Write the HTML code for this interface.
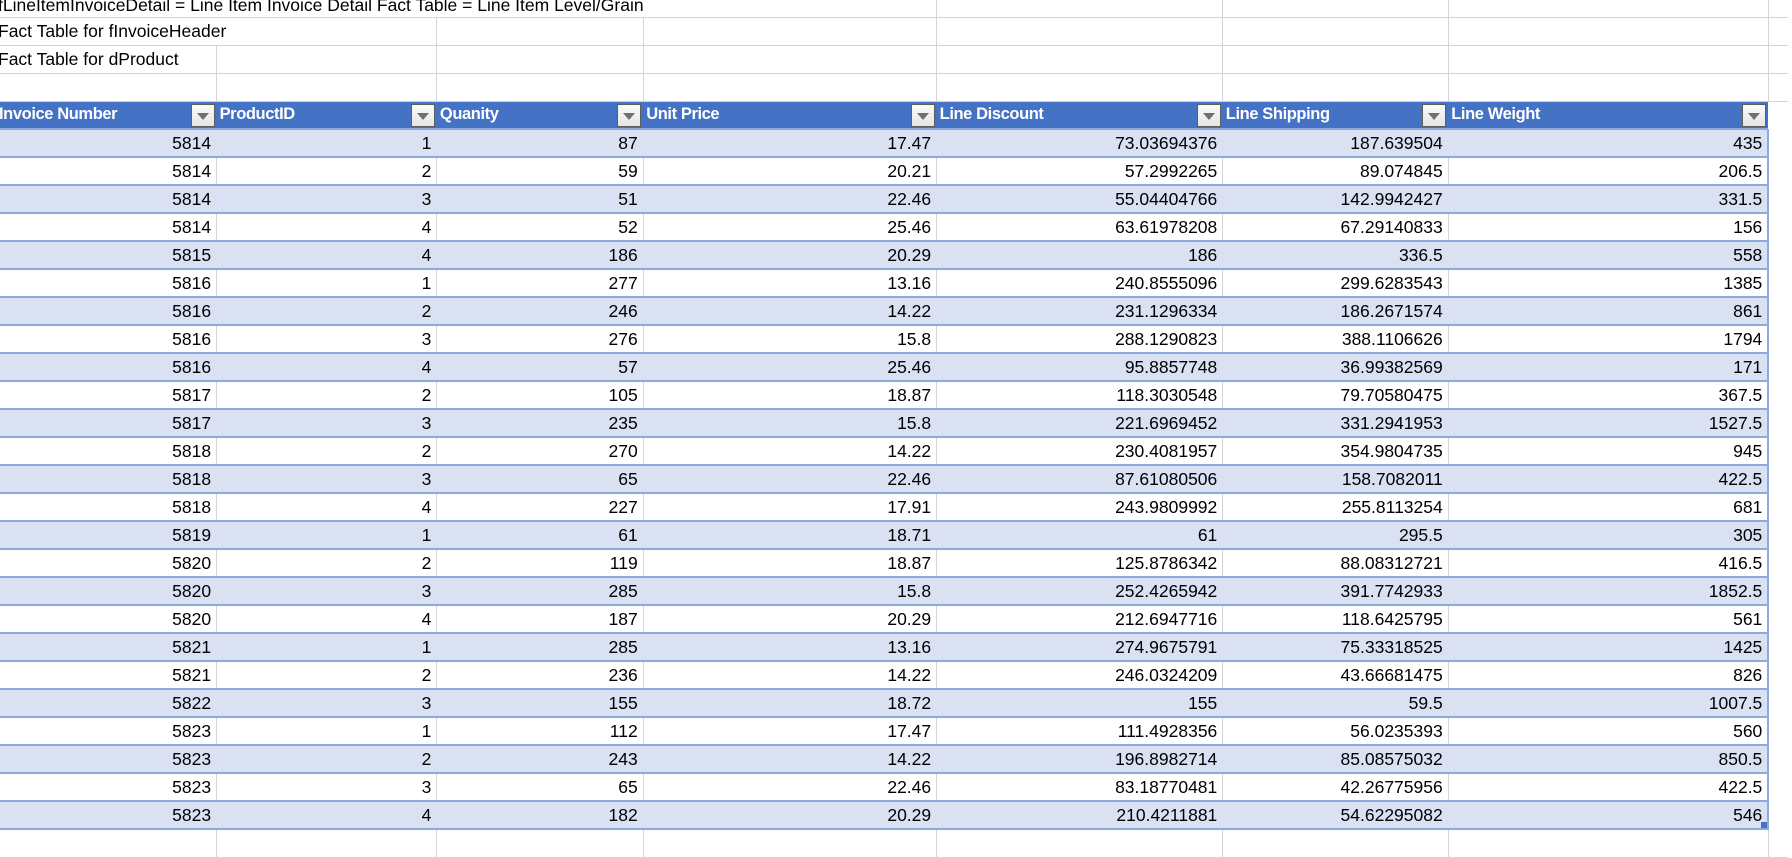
<!DOCTYPE html>
<html><head><meta charset="utf-8"><style>
html,body{margin:0;padding:0;width:1792px;height:836px;overflow:hidden;background:#fff}
table{position:absolute;left:-4px;top:-11px;border-collapse:collapse;table-layout:fixed;font-family:"Liberation Sans",Calibri,sans-serif;font-size:17.5px;color:#000}
td{height:28px;padding:0;box-sizing:border-box;white-space:nowrap;overflow:visible;vertical-align:middle}
tr.top td{border-bottom:1px solid #d4d4d4;padding-left:2px}
tr.top td.r{border-right:1px solid #d4d4d4}
tr.t1 td{padding-top:5px}
tr.h td{background:#4472c4;color:#fff;font-weight:bold;position:relative;padding-left:3px;border-bottom:2px solid #8ea9db;font-size:16.5px;letter-spacing:-0.4px}
.fb{position:absolute;right:2px;top:2px;width:24px;height:23px;box-sizing:border-box;border:1px solid #5d5d5d;background:linear-gradient(#fafafa,#e6e6e6)}
.fb:after{content:"";position:absolute;left:5px;top:8px;border-left:6px solid transparent;border-right:6px solid transparent;border-top:7px solid #707070}
tr.d td{text-align:right;padding-right:5px;border-bottom:2px solid #8ea9db;border-right:1px solid #d4d4d4;height:28px}
tr.d.b td{background:#d9e1f2;border-right-color:#d9e1f2}
tr.d td:last-child{border-right:2px solid #8ea9db}
.hd{position:absolute;right:0;bottom:0;width:6px;height:6px;background:#4472c4}
</style></head><body>
<table>
<colgroup><col style="width:221px"><col style="width:222px"><col style="width:208px"><col style="width:296px"><col style="width:290px"><col style="width:228px"><col style="width:325px"><col style="width:20px"></colgroup>
<tr class="top t1" style="height:28px"><td colspan="4" class="r">fLineItemInvoiceDetail = Line Item Invoice Detail Fact Table = Line Item Level/Grain</td><td class="r"></td><td class="r"></td><td class="r"></td><td></td></tr>
<tr class="top"><td colspan="2" class="r">Fact Table for fInvoiceHeader</td><td class="r"></td><td class="r"></td><td class="r"></td><td class="r"></td><td class="r"></td><td></td></tr>
<tr class="top"><td class="r">Fact Table for dProduct</td><td class="r"></td><td class="r"></td><td class="r"></td><td class="r"></td><td class="r"></td><td class="r"></td><td></td></tr>
<tr class="top"><td class="r"></td><td class="r"></td><td class="r"></td><td class="r"></td><td class="r"></td><td class="r"></td><td class="r"></td><td></td></tr>
<tr class="h"><td>Invoice Number<span class="fb"></span></td><td>ProductID<span class="fb"></span></td><td>Quanity<span class="fb"></span></td><td>Unit Price<span class="fb"></span></td><td>Line Discount<span class="fb"></span></td><td>Line Shipping<span class="fb"></span></td><td>Line Weight<span class="fb"></span></td><td style="background:#fff;border-bottom:none"></td></tr>
<tr class="d b"><td>5814</td><td>1</td><td>87</td><td>17.47</td><td>73.03694376</td><td>187.639504</td><td>435</td></tr>
<tr class="d"><td>5814</td><td>2</td><td>59</td><td>20.21</td><td>57.2992265</td><td>89.074845</td><td>206.5</td></tr>
<tr class="d b"><td>5814</td><td>3</td><td>51</td><td>22.46</td><td>55.04404766</td><td>142.9942427</td><td>331.5</td></tr>
<tr class="d"><td>5814</td><td>4</td><td>52</td><td>25.46</td><td>63.61978208</td><td>67.29140833</td><td>156</td></tr>
<tr class="d b"><td>5815</td><td>4</td><td>186</td><td>20.29</td><td>186</td><td>336.5</td><td>558</td></tr>
<tr class="d"><td>5816</td><td>1</td><td>277</td><td>13.16</td><td>240.8555096</td><td>299.6283543</td><td>1385</td></tr>
<tr class="d b"><td>5816</td><td>2</td><td>246</td><td>14.22</td><td>231.1296334</td><td>186.2671574</td><td>861</td></tr>
<tr class="d"><td>5816</td><td>3</td><td>276</td><td>15.8</td><td>288.1290823</td><td>388.1106626</td><td>1794</td></tr>
<tr class="d b"><td>5816</td><td>4</td><td>57</td><td>25.46</td><td>95.8857748</td><td>36.99382569</td><td>171</td></tr>
<tr class="d"><td>5817</td><td>2</td><td>105</td><td>18.87</td><td>118.3030548</td><td>79.70580475</td><td>367.5</td></tr>
<tr class="d b"><td>5817</td><td>3</td><td>235</td><td>15.8</td><td>221.6969452</td><td>331.2941953</td><td>1527.5</td></tr>
<tr class="d"><td>5818</td><td>2</td><td>270</td><td>14.22</td><td>230.4081957</td><td>354.9804735</td><td>945</td></tr>
<tr class="d b"><td>5818</td><td>3</td><td>65</td><td>22.46</td><td>87.61080506</td><td>158.7082011</td><td>422.5</td></tr>
<tr class="d"><td>5818</td><td>4</td><td>227</td><td>17.91</td><td>243.9809992</td><td>255.8113254</td><td>681</td></tr>
<tr class="d b"><td>5819</td><td>1</td><td>61</td><td>18.71</td><td>61</td><td>295.5</td><td>305</td></tr>
<tr class="d"><td>5820</td><td>2</td><td>119</td><td>18.87</td><td>125.8786342</td><td>88.08312721</td><td>416.5</td></tr>
<tr class="d b"><td>5820</td><td>3</td><td>285</td><td>15.8</td><td>252.4265942</td><td>391.7742933</td><td>1852.5</td></tr>
<tr class="d"><td>5820</td><td>4</td><td>187</td><td>20.29</td><td>212.6947716</td><td>118.6425795</td><td>561</td></tr>
<tr class="d b"><td>5821</td><td>1</td><td>285</td><td>13.16</td><td>274.9675791</td><td>75.33318525</td><td>1425</td></tr>
<tr class="d"><td>5821</td><td>2</td><td>236</td><td>14.22</td><td>246.0324209</td><td>43.66681475</td><td>826</td></tr>
<tr class="d b"><td>5822</td><td>3</td><td>155</td><td>18.72</td><td>155</td><td>59.5</td><td>1007.5</td></tr>
<tr class="d"><td>5823</td><td>1</td><td>112</td><td>17.47</td><td>111.4928356</td><td>56.0235393</td><td>560</td></tr>
<tr class="d b"><td>5823</td><td>2</td><td>243</td><td>14.22</td><td>196.8982714</td><td>85.08575032</td><td>850.5</td></tr>
<tr class="d"><td>5823</td><td>3</td><td>65</td><td>22.46</td><td>83.18770481</td><td>42.26775956</td><td>422.5</td></tr>
<tr class="d b"><td>5823</td><td>4</td><td>182</td><td>20.29</td><td>210.4211881</td><td>54.62295082</td><td style="position:relative">546<span class="hd"></span></td></tr>
<tr class="top"><td class="r"></td><td class="r"></td><td class="r"></td><td class="r"></td><td class="r"></td><td class="r"></td><td class="r"></td><td></td></tr>
</table>
</body></html>
